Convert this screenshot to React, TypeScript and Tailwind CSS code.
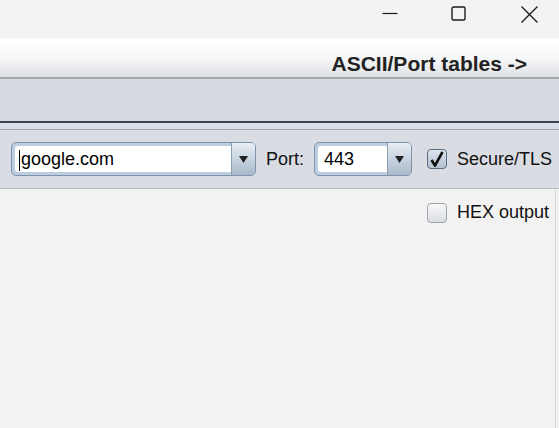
const font = { fontFamily: '"Liberation Sans", Arial, sans-serif' };

function Combo({ value, width, caret }: { value: string; width: string; caret?: boolean }) {
  return (
    <div className={`flex h-[34px] ${width} rounded-[5px] border border-[#7e93ab] bg-[#bccde0]`}>
      <div className="relative m-[3px] mr-0 flex flex-1 items-center rounded-l-[3px] bg-white pl-[6px] text-[18px] text-black">
        {caret && <span className="absolute left-[4px] top-[4px] h-[21px] w-px bg-black" />}
        {value}
      </div>
      <div className="flex w-[24px] items-center justify-center rounded-r-[4px] border-l border-[#8f9fb2] bg-gradient-to-b from-[#e9eef4] via-[#c9d4e1] to-[#a9b8c9]">
        <svg width="9" height="7" viewBox="0 0 9 7">
          <path d="M0 0h9L4.5 7z" fill="#222" />
        </svg>
      </div>
    </div>
  );
}

function Check({ checked }: { checked?: boolean }) {
  return (
    <div
      className={`flex h-[20px] w-[20px] items-center justify-center rounded-[4px] border ${
        checked
          ? "border-[#5a6b80] bg-gradient-to-b from-[#dfe6ee] to-[#b3c1d1]"
          : "border-[#9da3aa] bg-gradient-to-b from-[#f8f8f8] to-[#dcdee2]"
      }`}
    >
      {checked && (
        <svg width="14" height="16" viewBox="0 0 14 16">
          <path d="M1.5 9 L5 14.5 L12.5 1" fill="none" stroke="#111" strokeWidth="2.6" />
        </svg>
      )}
    </div>
  );
}

export default function App() {
  return (
    <div className="flex h-[428px] w-[559px] flex-col overflow-hidden bg-[#f2f2f2]" style={font}>
      {/* title bar */}
      <div className="flex h-[38px] items-start justify-end bg-[#f3f3f3] pt-[6px]">
        <svg width="16" height="16" viewBox="0 0 16 16" className="mr-[53px]">
          <path d="M0.5 7.5h15" stroke="#1b1b1b" strokeWidth="1.2" />
        </svg>
        <svg width="16" height="16" viewBox="0 0 16 16" className="mr-[54px]">
          <rect x="1" y="1" width="13" height="13" rx="1.5" fill="none" stroke="#1b1b1b" strokeWidth="1.4" />
        </svg>
        <svg width="17" height="17" viewBox="0 0 17 17" className="mr-[21px]">
          <path d="M0.5 0.5l16 16M16.5 0.5l-16 16" stroke="#1b1b1b" strokeWidth="1.3" />
        </svg>
      </div>

      {/* toolbar */}
      <div className="flex h-[41px] items-end justify-end border-b-2 border-[#a6aab0] bg-gradient-to-b from-[#ffffff] via-[#f6f7f8] to-[#dfe1e4] pb-[3px] pr-[32px]">
        <span className="text-[21px] font-bold leading-none text-[#222]">ASCII/Port tables -&gt;</span>
      </div>

      {/* tab strip */}
      <div className="h-[42px] bg-[#d6d9e0]" />
      <div className="h-[2px] bg-[#3a4656]" />
      <div className="h-[6px] bg-[#dbe0e8]" />
      <div className="h-px bg-[#9ca2aa]" />

      {/* connection row */}
      <div className="flex h-[59px] items-center border-b border-[#b9bcc2] bg-[#d9dce2] pl-[11px] text-[18px] text-[#111]">
        <Combo value="google.com" width="w-[245px]" caret />
        <span className="ml-[10px] w-[37px]">Port:</span>
        <div className="ml-[11px]">
          <Combo value="443" width="w-[98px]" />
        </div>
        <div className="ml-[15px]">
          <Check checked />
        </div>
        <span className="ml-[10px] whitespace-nowrap">Secure/TLS</span>
      </div>

      {/* output area */}
      <div className="flex flex-1">
        <div className="flex-1 border-r border-[#d2d4d8] bg-[#f2f2f2]">
          <div className="flex items-center justify-end pr-[6px] pt-[10px] text-[18px] text-[#111]">
            <Check />
            <span className="ml-[10px]">HEX output</span>
          </div>
        </div>
        <div className="w-[3px]" />
      </div>
    </div>
  );
}
